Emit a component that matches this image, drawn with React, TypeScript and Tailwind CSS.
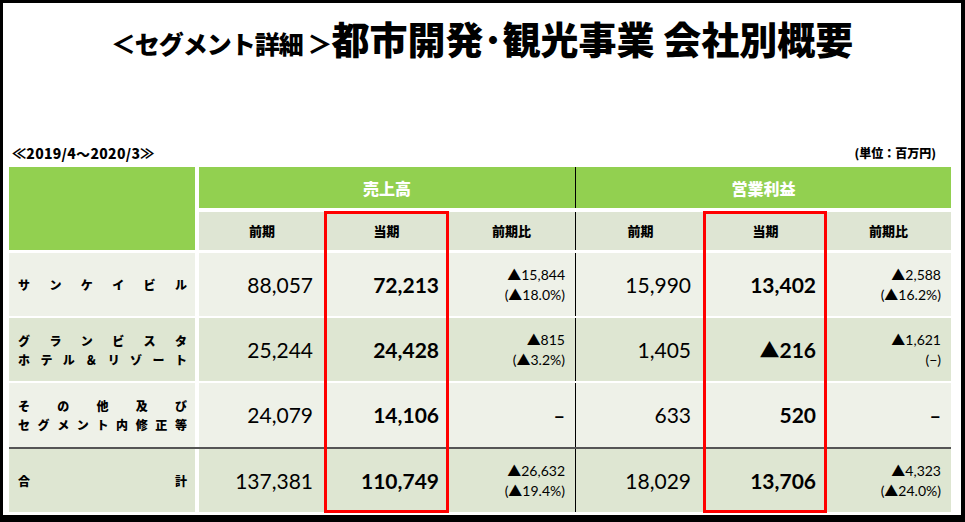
import React from 'react';

// 表の1行分
interface Row {
    label: string[][];
    bg: string;
    sales: { prev: string; cur: string; diff: string[] };
    profit: { prev: string; cur: React.ReactNode; diff: string[] };
}

const LIGHT = "bg-[#eef1e8]";
const GREEN = "bg-[#dee6d2]";

const rows: Row[] = [
    {
        label: [["サ", "ン", "ケ", "イ", "ビ", "ル"]],
        bg: LIGHT,
        sales: { prev: "88,057", cur: "72,213", diff: ["▲15,844", "(▲18.0%)"] },
        profit: { prev: "15,990", cur: "13,402", diff: ["▲2,588", "(▲16.2%)"] },
    },
    {
        label: [
            ["グ", "ラ", "ン", "ビ", "ス", "タ"],
            ["ホ", "テ", "ル", "＆", "リ", "ゾ", "ー", "ト"],
        ],
        bg: GREEN,
        sales: { prev: "25,244", cur: "24,428", diff: ["▲815", "(▲3.2%)"] },
        profit: {
            prev: "1,405",
            cur: (
                <span>
                    <span className="text-[20px]">▲</span>216
                </span>
            ),
            diff: ["▲1,621", "(−)"],
        },
    },
    {
        label: [
            ["そ", "の", "他", "及", "び"],
            ["セ", "グ", "メ", "ン", "ト", "内", "修", "正", "等"],
        ],
        bg: LIGHT,
        sales: { prev: "24,079", cur: "14,106", diff: [] },
        profit: { prev: "633", cur: "520", diff: [] },
    },
    {
        label: [["合", "計"]],
        bg: GREEN,
        sales: { prev: "137,381", cur: "110,749", diff: ["▲26,632", "(▲19.4%)"] },
        profit: { prev: "18,029", cur: "13,706", diff: ["▲4,323", "(▲24.0%)"] },
    },
];

const JP = "font-['Noto_Sans_CJK_JP',sans-serif]";
const NUM = "font-['Lato','Noto_Sans_CJK_JP',sans-serif]";

const DiffCell = ({ diff, w }: { diff: string[]; w: string }) => (
    <div className={`${w} h-full flex flex-col items-end justify-center pr-[10px] ${NUM}`}>
        {diff.length === 0 ? (
            <span className="text-[20px] font-bold leading-none">–</span>
        ) : (
            diff.map((d, i) => (
                <span key={i} className="text-[14px] leading-[20px] text-black">
                    {d}
                </span>
            ))
        )}
    </div>
);

const App: React.FC = () => {
    return (
        <div className="w-[965px] h-[522px] bg-black pt-[3px] pl-[3px] pr-[4px] pb-[7px]">
            <div className="w-full h-full bg-white flex flex-col">
                {/* タイトル */}
                <div className={`h-[141px] pt-[6px] flex justify-center items-baseline font-black text-black ${JP}`}>
                    <span className="text-[25px] tracking-[-1px]">＜セグメント詳細 ＞</span>
                    <span className="text-[38px]">都市開発･観光事業 会社別概要</span>
                </div>

                <div className={`h-[23px] flex justify-between items-start pl-[9px] pr-[25px] font-black text-black ${JP}`}>
                    <span className="text-[14px] leading-[18px] tracking-[0.3px]">≪2019/4〜2020/3≫</span>
                    <span className="text-[12px] leading-[18px]">(単位：百万円)</span>
                </div>

                {/* 表 */}
                <div className="relative w-[942px] ml-[6px]">
                    {/* ヘッダー */}
                    <div className="flex h-[83px]">
                        <div className="w-[186px] h-full bg-[#92d050]" />
                        <div className="w-[4px]" />
                        <div className="w-[752px] flex flex-col">
                            <div className={`h-[41px] flex bg-[#92d050] text-white font-black text-[16px] ${JP}`}>
                                <div className="w-[376px] flex items-center justify-center">売上高</div>
                                <div className="w-[376px] flex items-center justify-center border-l border-black">営業利益</div>
                            </div>
                            <div className="h-[4px]" />
                            <div className={`h-[38px] flex bg-[#dee5d3] text-black font-black text-[13px] ${JP}`}>
                                <div className="w-[126px] flex items-center justify-center">前期</div>
                                <div className="w-[123px] flex items-center justify-center">当期</div>
                                <div className="w-[127px] flex items-center justify-center">前期比</div>
                                <div className="w-[130px] flex items-center justify-center border-l border-black">前期</div>
                                <div className="w-[121px] flex items-center justify-center">当期</div>
                                <div className="w-[125px] flex items-center justify-center">前期比</div>
                            </div>
                        </div>
                    </div>

                    {/* データ行 */}
                    {rows.map((r, idx) => (
                        <React.Fragment key={idx}>
                            {idx === 3 ? (
                                <div className="h-[2px] bg-[#555555]" />
                            ) : (
                                <div className={idx === 0 ? "h-[3px]" : "h-[2px]"} />
                            )}
                            <div className={`flex ${idx === 2 ? "h-[64px]" : "h-[63px]"}`}>
                                <div
                                    className={`w-[186px] h-full ${r.bg} flex flex-col justify-center pl-[9px] pr-[8px] font-black text-[12px] leading-[19px] text-black ${JP}`}
                                >
                                    {r.label.map((line, li) => (
                                        <div key={li} className="flex justify-between">
                                            {line.map((c, ci) => (
                                                <span key={ci}>{c}</span>
                                            ))}
                                        </div>
                                    ))}
                                </div>
                                <div className="w-[4px]" />
                                <div className={`w-[752px] h-full flex ${r.bg} text-black`}>
                                    <div className={`w-[126px] flex items-center justify-end pr-[12px] text-[21px] ${NUM}`}>
                                        {r.sales.prev}
                                    </div>
                                    <div className={`w-[123px] flex items-center justify-end pr-[9px] text-[21px] font-bold ${NUM}`}>
                                        {r.sales.cur}
                                    </div>
                                    <DiffCell diff={r.sales.diff} w="w-[127px]" />
                                    <div
                                        className={`w-[130px] flex items-center justify-end pr-[14px] text-[21px] border-l border-black ${NUM}`}
                                    >
                                        {r.profit.prev}
                                    </div>
                                    <div className={`w-[121px] flex items-center justify-end pr-[10px] text-[21px] font-bold ${NUM}`}>
                                        {r.profit.cur}
                                    </div>
                                    <DiffCell diff={r.profit.diff} w="w-[125px]" />
                                </div>
                            </div>
                        </React.Fragment>
                    ))}

                    {/* 赤枠 */}
                    <div className="absolute left-[315px] top-[44px] w-[125px] h-[302px] border-[3px] border-[#ff0000] pointer-events-none" />
                    <div className="absolute left-[694px] top-[44px] w-[124px] h-[302px] border-[3px] border-[#ff0000] pointer-events-none" />
                </div>
            </div>
        </div>
    );
};

export default App;
